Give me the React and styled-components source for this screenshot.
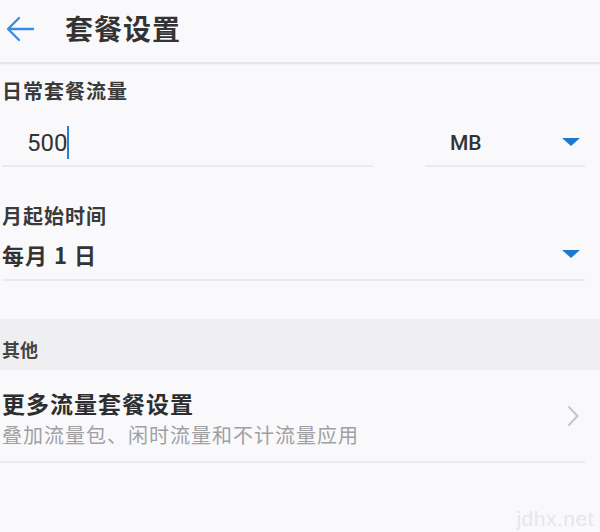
import React from "react";
import styled, { createGlobalStyle } from "styled-components";

const Global = createGlobalStyle`
  html, body { margin: 0; padding: 0; background: #f9f9fb; }
  body {
    font-family: "Noto Sans CJK SC", "Noto Sans", Roboto, sans-serif;
    color: #2b2b2b;
  }
`;

const Page = styled.div`
  width: 600px;
  height: 532px;
  position: relative;
  overflow: hidden;
  background: #f9f9fb;
`;

const Header = styled.header`
  height: 62px;
  display: flex;
  align-items: center;
  padding-left: 4px;
  border-bottom: 2px solid #e6e6ea;
  box-shadow: 0 1px 2px rgba(0, 0, 0, 0.04);
`;

const BackButton = styled.div`
  width: 32px;
  height: 28px;
  display: flex;
  align-items: center;
  justify-content: center;
  margin-top: -4px;
`;

const Title = styled.h1`
  margin: -6px 0 0 29px;
  font-size: 28px;
  font-weight: 700;
  letter-spacing: 1px;
  color: #333;
  line-height: 1;
`;

const Section = styled.section`
  padding: ${(p) => p.$pt}px 15px 0 2px;
`;

const Label = styled.div`
  font-size: 20px;
  font-weight: 700;
  letter-spacing: 1px;
  color: #3a3a3a;
  line-height: 26px;
`;

const FieldRow = styled.div`
  display: flex;
  align-items: flex-end;
  gap: 52px;
`;

const Field = styled.div`
  flex: ${(p) => p.$flex};
  box-sizing: border-box;
  display: flex;
  align-items: center;
  height: ${(p) => p.$h}px;
  padding: ${(p) => p.$pt}px 5px 0 ${(p) => p.$pl}px;
  border-bottom: 2px solid #ebebef;
`;

const NumberValue = styled.span`
  font-family: Roboto, "Noto Sans", sans-serif;
  font-size: 24px;
  color: #333;
  display: flex;
  align-items: center;
`;

const Caret = styled.span`
  display: inline-block;
  width: 2px;
  height: 33px;
  background: #2a7fd0;
`;

const UnitText = styled.span`
  flex: 1;
  font-family: Roboto, "Noto Sans", sans-serif;
  font-size: 21px;
  font-weight: 500;
  color: #333;
`;

const ValueText = styled.span`
  flex: 1;
  font-size: 22px;
  font-weight: 700;
  color: #333;
  letter-spacing: 1px;
`;

const GroupHeader = styled.div`
  margin-top: 38px;
  height: 51px;
  background: #efeff2;
  display: flex;
  align-items: flex-end;
  padding: 0 0 8px 2px;
  box-sizing: border-box;
  font-size: 18px;
  font-weight: 700;
  color: #444;
`;

const ListItem = styled.div`
  margin: 0 15px 0 0;
  height: 93px;
  display: flex;
  align-items: center;
  padding: 0 6px 0 2px;
  border-bottom: 2px solid #ebebef;
  box-sizing: border-box;
`;

const ItemText = styled.div`
  flex: 1;
  display: flex;
  flex-direction: column;
  padding-top: 6px;
`;

const ItemTitle = styled.div`
  font-size: 23px;
  font-weight: 700;
  color: #2e2e2e;
  letter-spacing: 1px;
  line-height: 32px;
`;

const ItemSub = styled.div`
  font-size: 20px;
  color: #a0a0a4;
  letter-spacing: 1px;
  line-height: 32px;
`;

const Watermark = styled.div`
  position: absolute;
  right: 6px;
  bottom: 1px;
  font-family: "Liberation Sans", Arial, sans-serif;
  font-size: 21px;
  color: #e6e6ec;
  letter-spacing: 0.5px;
`;

const Arrow = () => (
  <svg width="30" height="26" viewBox="0 0 30 26">
    <path
      d="M28 13 H4 M14 2 L3 13 L14 24"
      fill="none"
      stroke="#3a8ee0"
      strokeWidth="2.4"
      strokeLinecap="round"
      strokeLinejoin="round"
    />
  </svg>
);

const Triangle = () => (
  <svg width="18" height="9" viewBox="0 0 18 9">
    <path d="M0 0 H18 L9 8 Z" fill="#1f78cf" />
  </svg>
);

const Chevron = () => (
  <svg width="12" height="22" viewBox="0 0 12 22">
    <path
      d="M1.5 1.5 L10.5 11 L1.5 20.5"
      fill="none"
      stroke="#c6c6ca"
      strokeWidth="2"
    />
  </svg>
);

export default function App() {
  return (
    <Page>
      <Global />
      <Header>
        <BackButton>
          <Arrow />
        </BackButton>
        <Title>套餐设置</Title>
      </Header>

      <Section $pt={14}>
        <Label>日常套餐流量</Label>
        <FieldRow>
          <Field $flex="0 0 371px" $h={63} $pt={16} $pl={25}>
            <NumberValue>
              500
              <Caret />
            </NumberValue>
          </Field>
          <Field $flex="1" $h={63} $pt={16} $pl={25}>
            <UnitText>MB</UnitText>
            <Triangle />
          </Field>
        </FieldRow>
      </Section>

      <Section $pt={36}>
        <Label>月起始时间</Label>
        <Field $flex="none" $h={52} $pt={0} $pl={0}>
          <ValueText>每月 1 日</ValueText>
          <Triangle />
        </Field>
      </Section>

      <GroupHeader>其他</GroupHeader>

      <ListItem>
        <ItemText>
          <ItemTitle>更多流量套餐设置</ItemTitle>
          <ItemSub>叠加流量包、闲时流量和不计流量应用</ItemSub>
        </ItemText>
        <Chevron />
      </ListItem>

      <Watermark>jdhx.net</Watermark>
    </Page>
  );
}
